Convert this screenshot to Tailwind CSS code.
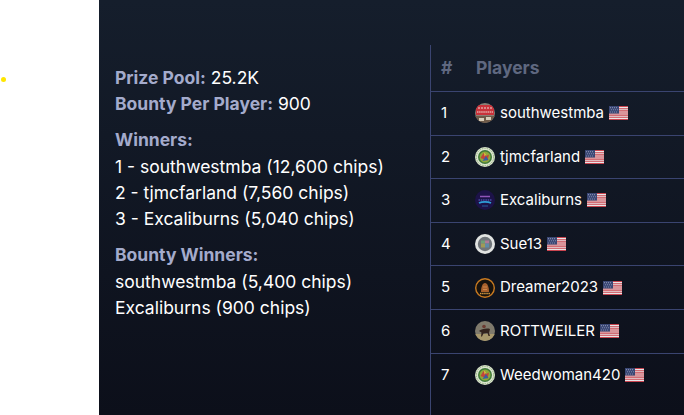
<!DOCTYPE html>
<html lang="en">
<head>
<meta charset="utf-8">
<title>Tournament results</title>
<script src="https://cdn.jsdelivr.net/npm/@tailwindcss/browser@4"></script>
</head>
<body class="bg-white font-['Inter','Liberation_Sans',sans-serif]">
<svg width="0" height="0" class="absolute">
  <defs>
    <symbol id="us" viewBox="0 0 19 13" preserveAspectRatio="none">
      <rect width="19" height="13" fill="#e9e4e6"/>
      <path d="M0 0h19v1H0zM0 2h19v1H0zM0 4h19v1H0zM0 6h19v1H0zM0 8h19v1H0zM0 10h19v1H0zM0 12h19v1H0z" fill="#c9444f"/>
      <rect width="10" height="7" fill="#3a4774"/>
      <path d="M1 1h1v1H1zM3 1h1v1H3zM5 1h1v1H5zM7 1h1v1H7zM2 3h1v1H2zM4 3h1v1H4zM6 3h1v1H6zM8 3h1v1H8zM1 5h1v1H1zM3 5h1v1H3zM5 5h1v1H5zM7 5h1v1H7z" fill="#7f88aa"/>
    </symbol>
    <symbol id="green" viewBox="0 0 20 20">
      <circle cx="10" cy="10" r="10" fill="#dde5d0"/>
      <circle cx="10" cy="10" r="8.700" fill="none" stroke="#8fb07a" stroke-width="1" stroke-dasharray="1.500 1"/>
      <circle cx="10" cy="10" r="7" fill="#3f7a3a"/>
      <circle cx="10" cy="10" r="5.500" fill="#8fa83a"/>
      <path d="M5.500 11l3-5 2.500 3 3-1.500-1.500 6z" fill="#c2453a"/>
      <path d="M7.500 14l3.500-5 2.500 4z" fill="#3a5fa0"/>
      <path d="M9 5.500l2 2-1.500 2z" fill="#e0c040"/>
    </symbol>
  </defs>
</svg>

<div class="absolute left-[1px] top-[76.500px] w-[5px] h-[5px] rounded-full bg-[#ffe600]"></div>

<main class="ml-[99px] h-[415px] overflow-hidden bg-gradient-to-b from-[#151e2c] to-[#0c0f1a] flex text-white">
  <!-- prize summary -->
  <section class="w-[331px] shrink-0 pl-4 pt-[65px] text-[17.500px] leading-[26.250px] text-white">
    <p><b class="font-bold text-[#a4abcc]">Prize Pool:</b> 25.2K</p>
    <p><b class="font-bold text-[#a4abcc]">Bounty Per Player:</b> 900</p>
    <p class="mt-[9.900px] font-bold text-[#a4abcc]">Winners:</p>
    <p>1 - southwestmba (12,600 chips)</p>
    <p>2 - tjmcfarland (7,560 chips)</p>
    <p>3 - Excaliburns (5,040 chips)</p>
    <p class="mt-[9.900px] font-bold text-[#a4abcc]">Bounty Winners:</p>
    <p>southwestmba (5,400 chips)</p>
    <p>Excaliburns (900 chips)</p>
  </section>

  <!-- players table -->
  <section class="flex-1 mt-[45px] border-l border-[#3a4470] text-[15px]">
    <div class="flex items-center h-[47px] border-b border-[#3a4470] text-[17.500px] font-bold text-[#5f6880]">
      <div class="w-[45px] pl-[10px]">#</div>
      <div>Players</div>
    </div>

    <div class="flex items-center h-[43.6px] border-b border-[#3a4470]">
      <div class="w-[44px] pl-[10px]">1</div>
      <svg class="w-5 h-5 mr-[5px]" viewBox="0 0 20 20">
        <defs><clipPath id="a1"><circle cx="10" cy="10" r="10"/></clipPath></defs>
        <g clip-path="url(#a1)">
          <rect width="20" height="20" fill="#8a7f76"/>
          <rect x="1" y="2" width="18" height="10" fill="#c9323a"/>
          <path d="M3 5h14" stroke="#eadcd6" stroke-width="1" stroke-dasharray="2 1"/>
          <path d="M2 9h16" stroke="#f0e4dc" stroke-width="1.200" stroke-dasharray="1.500 .6"/>
          <rect y="13" width="20" height="7" fill="#6e5a48"/>
          <path d="M4 15h5v3H4zM11 14h5v3h-5z" fill="#d8cdb8"/>
        </g>
      </svg>
      <span>southwestmba</span>
      <svg class="w-[19px] h-[14px] ml-[5px]"><use href="#us"/></svg>
    </div>

    <div class="flex items-center h-[43.6px] border-b border-[#3a4470]">
      <div class="w-[44px] pl-[10px]">2</div>
      <svg class="w-5 h-5 mr-[5px]"><use href="#green"/></svg>
      <span>tjmcfarland</span>
      <svg class="w-[19px] h-[14px] ml-[5px]"><use href="#us"/></svg>
    </div>

    <div class="flex items-center h-[43.6px] border-b border-[#3a4470]">
      <div class="w-[44px] pl-[10px]">3</div>
      <svg class="w-5 h-5 mr-[5px]" viewBox="0 0 20 20">
        <circle cx="10" cy="10" r="10" fill="#1c1248"/>
        <path d="M5 6.500h10" stroke="#8f55b8" stroke-width="1.500"/>
        <path d="M3.500 10h13" stroke="#5f6ad0" stroke-width="1" stroke-dasharray="1.500 .8"/>
        <path d="M4 13c3-1.500 9-1.500 12 0" stroke="#2f9fd8" stroke-width="1.800" fill="none"/>
        <path d="M7 16h6" stroke="#245a98" stroke-width="1"/>
      </svg>
      <span>Excaliburns</span>
      <svg class="w-[19px] h-[14px] ml-[5px]"><use href="#us"/></svg>
    </div>

    <div class="flex items-center h-[43.6px] border-b border-[#3a4470]">
      <div class="w-[44px] pl-[10px]">4</div>
      <svg class="w-5 h-5 mr-[5px]" viewBox="0 0 20 20">
        <circle cx="10" cy="10" r="10" fill="#e2e4e2"/>
        <circle cx="10" cy="10" r="7.200" fill="#70757a"/>
        <path d="M6 6.500h4v3H6z" fill="#6fa07a"/>
        <path d="M10 6.500h4v3h-4z" fill="#b07a98"/>
        <path d="M6 9.500h4v4H6z" fill="#a09a58"/>
        <path d="M10 9.500h4v4h-4z" fill="#5f8aa8"/>
      </svg>
      <span>Sue13</span>
      <svg class="w-[19px] h-[14px] ml-[5px]"><use href="#us"/></svg>
    </div>

    <div class="flex items-center h-[43.6px] border-b border-[#3a4470]">
      <div class="w-[44px] pl-[10px]">5</div>
      <svg class="w-5 h-5 mr-[5px]" viewBox="0 0 20 20">
        <circle cx="10" cy="10" r="9.300" fill="#17120e" stroke="#c87a20" stroke-width="1.400"/>
        <path d="M6 14c0-5 1.500-9 4-9s4 4 4 9z" fill="#a8602c"/>
        <path d="M8 9h4M8 11.500h4" stroke="#d89050" stroke-width=".8"/>
        <path d="M5 15.500h10" stroke="#d89a40" stroke-width="1.500" stroke-dasharray="1.500 .6"/>
      </svg>
      <span>Dreamer2023</span>
      <svg class="w-[19px] h-[14px] ml-[5px]"><use href="#us"/></svg>
    </div>

    <div class="flex items-center h-[43.6px] border-b border-[#3a4470]">
      <div class="w-[44px] pl-[10px]">6</div>
      <svg class="w-5 h-5 mr-[5px]" viewBox="0 0 20 20">
        <defs><clipPath id="a6"><circle cx="10" cy="10" r="10"/></clipPath></defs>
        <g clip-path="url(#a6)">
          <rect width="20" height="20" fill="#7f7a6c"/>
          <rect y="13" width="20" height="7" fill="#a8986c"/>
          <path d="M4 10c2-2 8-3 11-2l-1 4 1 3h-1.500l-1-3-4 .5-1.500 3H6l.5-4z" fill="#33241e"/>
          <circle cx="9" cy="5.500" r="1.800" fill="#6a3a30"/>
        </g>
      </svg>
      <span>ROTTWEILER</span>
      <svg class="w-[19px] h-[14px] ml-[5px]"><use href="#us"/></svg>
    </div>

    <div class="flex items-center h-[43.6px]">
      <div class="w-[44px] pl-[10px]">7</div>
      <svg class="w-5 h-5 mr-[5px]"><use href="#green"/></svg>
      <span>Weedwoman420</span>
      <svg class="w-[19px] h-[14px] ml-[5px]"><use href="#us"/></svg>
    </div>
  </section>
</main>
</body>
</html>
